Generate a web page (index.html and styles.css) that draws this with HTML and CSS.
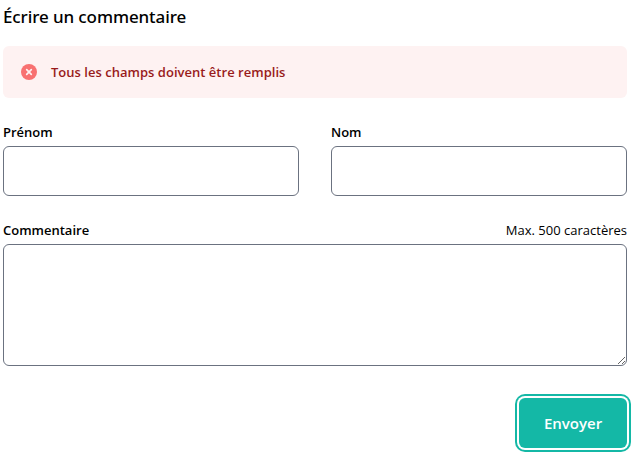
FILE: index.html
```html
<!DOCTYPE html>
<html lang="fr">
<head>
<meta charset="utf-8">
<title>Commentaire</title>
<link rel="stylesheet" href="styles.css">
</head>
<body>
<form class="form">
  <h2 class="title">Écrire un commentaire</h2>
  <div class="alert" role="alert">
    <svg class="alert-icon" viewBox="0 0 20 20"><circle cx="10" cy="10" r="8" fill="currentColor"/><path d="M7.7 7.7l4.6 4.6M12.3 7.7l-4.6 4.6" stroke="#fef2f2" stroke-width="1.7" stroke-linecap="round"/></svg>
    <p class="alert-text">Tous les champs doivent être remplis</p>
  </div>
  <div class="row">
    <div class="field">
      <label class="label" for="first">Prénom</label>
      <input class="input" id="first" type="text">
    </div>
    <div class="field">
      <label class="label" for="last">Nom</label>
      <input class="input" id="last" type="text">
    </div>
  </div>
  <div class="comment">
    <div class="comment-head">
      <label class="label" for="comment">Commentaire</label>
      <span class="hint">Max. 500 caractères</span>
    </div>
    <textarea class="input area" id="comment"></textarea>
  </div>
  <div class="actions"><button class="submit" type="button">Envoyer</button></div>
</form>
</body>
</html>
```
FILE: styles.css
```css
* { box-sizing: border-box; }
body {
  margin: 0;
  min-height: 456px;
  background: #fff;
  color: #000;
  font-family: "Open Sans", "Noto Sans", sans-serif;
}
.form { padding: 3px 7px 8px 3px; }
.title { margin: 0; font-family: "Noto Sans", "Open Sans", sans-serif; font-size: 17px; line-height: 28px; font-weight: 500; letter-spacing: -0.1px; white-space: nowrap; }
.alert {
  display: flex;
  align-items: center;
  gap: 12px;
  height: 52px;
  margin-top: 15px;
  padding: 0 16px;
  border-radius: 6px;
  background: #fef2f2;
}
.alert-icon { width: 20px; height: 20px; color: #f87171; }
.alert-text { margin: 0; font-size: 13px; line-height: 20px; font-weight: 600; letter-spacing: 0.02px; color: #991b1b; }
.row { display: grid; grid-template-columns: 1fr 1fr; gap: 32px; margin-top: 24px; }
.field, .comment { display: flex; flex-direction: column; align-items: flex-start; }
.label { font-size: 13px; line-height: 20px; font-weight: 600; }
.input {
  display: block;
  width: 100%;
  height: 50px;
  margin: 4px 0 0;
  padding: 12px 16px;
  border: 1px solid #6b7280;
  border-radius: 6px;
  background: #fff;
  font: inherit;
}
.comment { margin-top: 24px; }
.comment-head { display: flex; justify-content: space-between; width: 100%; }
.hint { font-size: 13px; line-height: 20px; }
.area { height: 122px; resize: vertical; }
.actions { display: flex; justify-content: flex-end; margin-top: 32px; }
.submit {
  width: 108px;
  height: 50px;
  padding: 0;
  border: 0;
  border-radius: 6px;
  background: #14b8a6;
  color: #fff;
  font: 600 15px/24px "Open Sans", sans-serif;
  box-shadow: 0 0 0 2px #fff, 0 0 0 4px #14b8a6;
}
```
